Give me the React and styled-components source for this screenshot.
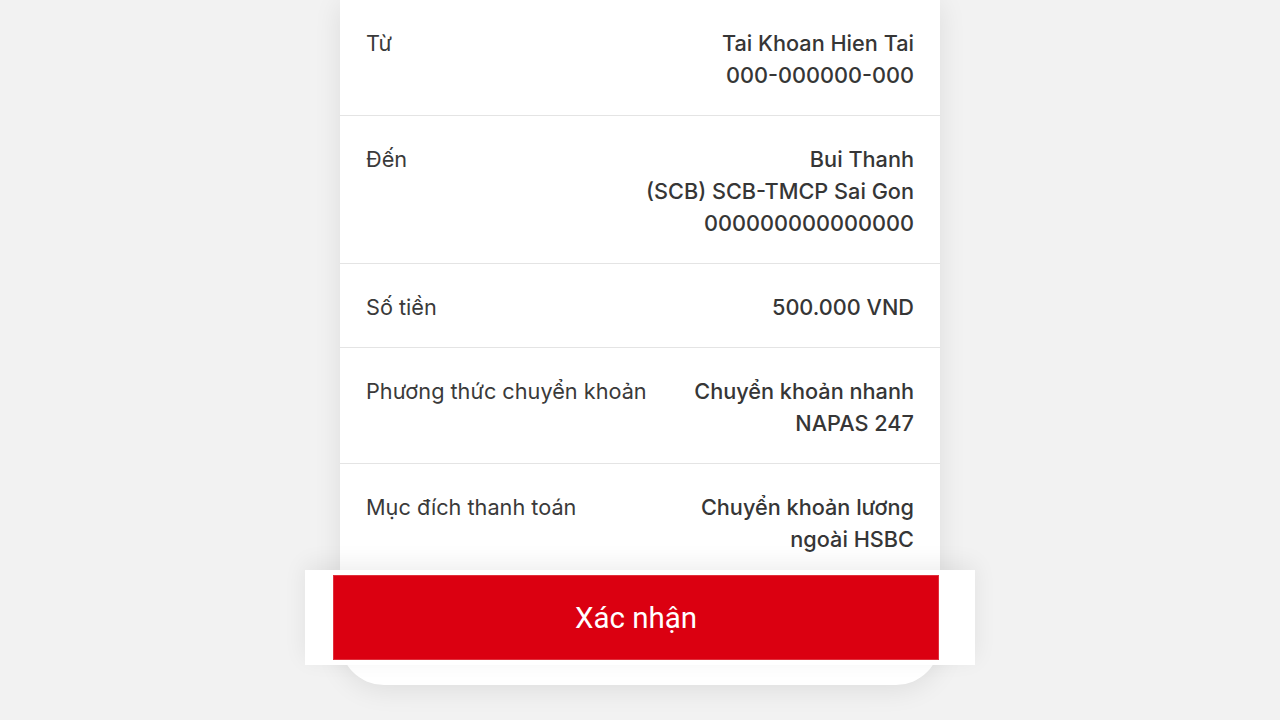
import React from "react";
import styled, { createGlobalStyle } from "styled-components";

const Global = createGlobalStyle`
  html, body { margin: 0; padding: 0; background: #f2f2f2; }
  body { font-family: "Inter", "Noto Sans", "Liberation Sans", sans-serif; -webkit-font-smoothing: antialiased; }
  * { box-sizing: border-box; }
`;

const Page = styled.div`
  width: 1280px;
  height: 720px;
  overflow: hidden;
  display: flex;
  justify-content: center;
  background: #f2f2f2;
`;

const Card = styled.div`
  width: 600px;
  height: 685px;
  background: #ffffff;
  border-radius: 0 0 44px 44px;
  box-shadow: 0 4px 28px rgba(0, 0, 0, 0.09);
  display: flex;
  flex-direction: column;
`;

const Row = styled.div`
  display: flex;
  justify-content: space-between;
  align-items: flex-start;
  gap: 24px;
  padding: 27px 26px ${(p) => (p.$last ? "15px" : "24px")};
  border-bottom: ${(p) => (p.$last ? "none" : "1px solid #e4e4e4")};
`;

const Label = styled.div`
  font-size: 21.7px;
  line-height: 32px;
  color: #3a3a3a;
  font-weight: 400;
  white-space: nowrap;
`;

const Value = styled.div`
  display: flex;
  flex-direction: column;
  align-items: flex-end;
  text-align: right;
`;

const Line = styled.span`
  font-size: 21.7px;
  line-height: 32px;
  color: #363636;
  font-weight: 500;
  white-space: nowrap;
`;

const Footer = styled.div`
  margin: 0 -35px;
  padding: 5px 36px 5px 28px;
  background: #ffffff;
  box-shadow: 0 -6px 22px rgba(0, 0, 0, 0.07);
  position: relative;
`;

const ConfirmButton = styled.button`
  width: 100%;
  height: 85px;
  border: 1px solid #e0303c;
  background: #db0011;
  color: #ffffff;
  font-family: "Roboto", "Liberation Sans", sans-serif;
  font-size: 29.5px;
  font-weight: 400;
  display: flex;
  align-items: center;
  justify-content: center;
  cursor: pointer;
  padding: 0;
`;

const rows = [
  { label: "Từ", value: ["Tai Khoan Hien Tai", "000-000000-000"] },
  { label: "Đến", value: ["Bui Thanh", "(SCB) SCB-TMCP Sai Gon", "000000000000000"] },
  { label: "Số tiền", value: ["500.000 VND"] },
  { label: "Phương thức chuyển khoản", value: ["Chuyển khoản nhanh", "NAPAS 247"] },
  { label: "Mục đích thanh toán", value: ["Chuyển khoản lương", "ngoài HSBC"] },
];

export default function App() {
  return (
    <>
      <Global />
      <Page>
        <Card>
          {rows.map((r, i) => (
            <Row key={r.label} $last={i === rows.length - 1}>
              <Label>{r.label}</Label>
              <Value>
                {r.value.map((v) => (
                  <Line key={v}>{v}</Line>
                ))}
              </Value>
            </Row>
          ))}
          <Footer>
            <ConfirmButton>Xác nhận</ConfirmButton>
          </Footer>
        </Card>
      </Page>
    </>
  );
}
